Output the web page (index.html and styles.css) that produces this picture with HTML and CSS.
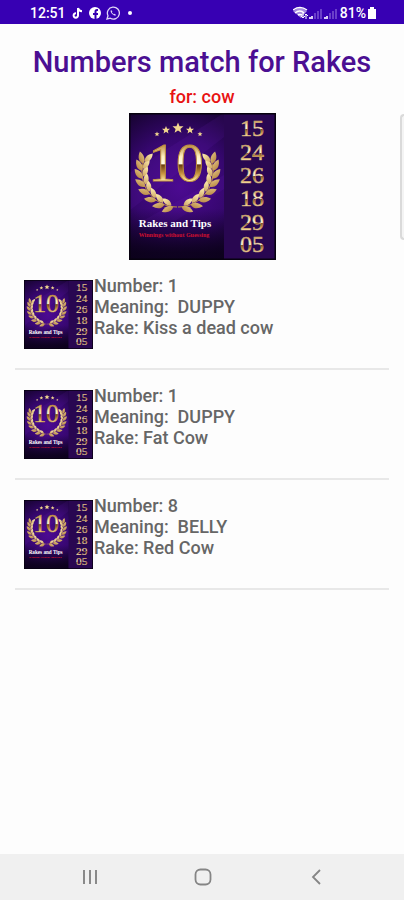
FILE: index.html
```html
<!DOCTYPE html>
<html lang="en">
<head>
    <meta charset="UTF-8">
    <meta name="viewport" content="width=device-width, initial-scale=1.0">
    <title>Rakes and Tips</title>
    <link rel="stylesheet" href="styles.css">
</head>
<body>
<!-- Shared logo -->
<svg class="defs" width="0" height="0" aria-hidden="true">
    <defs>
        <radialGradient id="night" cx="0.35" cy="0.5" r="0.6">
            <stop offset="0" stop-color="#4c0a92"/>
            <stop offset="0.55" stop-color="#36076f"/>
            <stop offset="1" stop-color="#16032f"/>
        </radialGradient>
        <linearGradient id="shade" x1="0" y1="0" x2="0" y2="1">
            <stop offset="0.65" stop-color="#0a0118" stop-opacity="0"/>
            <stop offset="0.95" stop-color="#0a0118" stop-opacity="0.85"/>
        </linearGradient>
        <linearGradient id="gold" x1="0" y1="0" x2="0" y2="1">
            <stop offset="0.2" stop-color="#b8893c"/>
            <stop offset="0.4" stop-color="#fff0c0"/>
            <stop offset="0.52" stop-color="#fffbe8"/>
            <stop offset="0.54" stop-color="#6a3c10"/>
            <stop offset="0.68" stop-color="#c89440"/>
            <stop offset="0.8" stop-color="#ffe9a8"/>
        </linearGradient>
        <linearGradient id="laurel" gradientUnits="userSpaceOnUse" x1="-10" y1="-6" x2="2" y2="6">
            <stop offset="0" stop-color="#f8e2a4"/>
            <stop offset="1" stop-color="#a8712c"/>
        </linearGradient>
        <g id="leaves" fill="url(#laurel)">
            <path d="M0 0C-1 5-5 7-11 6C-9 1-4-2 0 0Z"/>
            <path d="M-2-1C-3-6-7-8-12-7C-10-2-6 0-2-1Z"/>
        </g>
        <g id="branch">
            <path d="M48 93A35 35 0 0 1 15 46" fill="none" stroke="#c1923f"/>
            <use href="#leaves" transform="rotate(6 48 58) translate(48 93)"/>
            <use href="#leaves" transform="rotate(21 48 58) translate(48 93)"/>
            <use href="#leaves" transform="rotate(36 48 58) translate(48 93)"/>
            <use href="#leaves" transform="rotate(51 48 58) translate(48 93)"/>
            <use href="#leaves" transform="rotate(65 48 58) translate(48 93)"/>
            <use href="#leaves" transform="rotate(79 48 58) translate(48 93)"/>
            <use href="#leaves" transform="rotate(92 48 58) translate(48 93)"/>
            <use href="#leaves" transform="rotate(104 48 58) translate(48 93)"/>
        </g>
        <path id="star" d="M0-5L1.4-1.7L5-1.5L2.2 0.8L3.1 4.3L0 2.3L-3.1 4.3L-2.2 0.8L-5-1.5L-1.4-1.7Z" fill="#f3d88e"/>
        <symbol id="logo" viewBox="0 0 147 147">
            <rect width="147" height="147" fill="url(#night)"/>
            <path d="M0 60L95 0V24L0 98ZM10 110L95 62V76L40 112Z" fill="#7424c8" opacity="0.12"/>
            <rect width="95" height="147" fill="url(#shade)"/>
            <rect x="95" width="52" height="147" fill="#290751"/>
            <use href="#star" transform="translate(28 21) scale(0.5)"/>
            <use href="#star" transform="translate(37 17) scale(0.8)"/>
            <use href="#star" transform="translate(49 15) scale(1.1)"/>
            <use href="#star" transform="translate(61 17) scale(0.8)"/>
            <use href="#star" transform="translate(71 21) scale(0.5)"/>
            <g transform="translate(0 1)">
                <use href="#branch"/>
                <use href="#branch" transform="translate(97 0) scale(-1 1)"/>
            </g>
            <text class="logo-ten" x="47" y="68">10</text>
            <text class="logo-name" x="46" y="114">Rakes and Tips</text>
            <text class="logo-tagline" x="45" y="124">Winnings without Guessing</text>
            <g class="logo-draw">
                <text x="123" y="23">15</text>
                <text x="123" y="47">24</text>
                <text x="123" y="70">26</text>
                <text x="123" y="93">18</text>
                <text x="123" y="117">29</text>
                <text x="123" y="139">05</text>
            </g>
            <rect x="0.5" y="0.5" width="146" height="146" fill="none" stroke="#07020f" stroke-width="2"/>
        </symbol>
    </defs>
</svg>

<!-- Status bar -->
<header class="status-bar">
    <div class="status-group">
        <span class="status-time">12:51</span>
        <svg width="12" height="14" viewBox="0 0 12 14" aria-hidden="true">
            <path d="M6 2V9.5A2.2 2.2 0 1 1 4 7.3M6 2C6.5 4.2 8 5.2 10 5.3" fill="none" stroke="#fff" stroke-width="2"/>
        </svg>
        <svg width="12" height="14" viewBox="0 0 12 14" aria-hidden="true">
            <circle cx="6" cy="7" r="6" fill="#fff"/>
            <path d="M9 4H8Q6.500 4 6.500 5.500V13M4 8H9" fill="none" stroke="#3700b3" stroke-width="2"/>
        </svg>
        <svg width="14" height="14" viewBox="0 0 14 14" aria-hidden="true">
            <path d="M1 13L2 9.700A6 6 0 1 1 4.300 12.200Z" fill="none" stroke="#e0d6f6" stroke-width="1.300"/>
            <path d="M5 4C4 5 5 7 6.500 8.300S9.500 10 10 9L8.700 7.800L7.700 8.300L5.900 6.400L6.300 5.300Z" fill="#e0d6f6"/>
        </svg>
        <span class="status-dot"></span>
    </div>
    <div class="status-group status-right">
        <svg width="46" height="14" viewBox="0 0 46 14" aria-hidden="true">
            <path d="M0 5Q7-1 14 5L8 12Z" fill="#a78be0"/>
            <path d="M0 4Q7-1 14 4M2 7Q7 3 11 7M5 9Q7 8 9 9" fill="none" stroke="#fff" stroke-width="1.400"/>
            <path d="M10 7V12M8 10L10 12L12 10M13 13V8M12 9L13 8L15 10" fill="none" stroke="#fff"/>
            <path d="M17 13V11M19 13V10M32 13V11M34 13V10" stroke="#d9cdf4" stroke-width="2"/>
            <path d="M22 13V7M25 13V5M28 13V3M37 13V7M40 13V5M43 13V3" stroke="#6a3fca" stroke-width="2"/>
        </svg>
        <span class="status-battery">81%</span>
        <svg width="10" height="14" viewBox="0 0 10 14" aria-hidden="true">
            <path d="M3 1H7V3H9V13H1V3H3Z" fill="#fff"/>
        </svg>
    </div>
</header>

<main>
    <h1 class="title">Numbers match for Rakes</h1>
    <p class="subtitle">for: cow</p>
    <svg class="logo" role="img" aria-label="Rakes and Tips"><use href="#logo"/></svg>

    <ul class="results">
        <li class="result">
            <svg class="thumb" aria-hidden="true"><use href="#logo"/></svg>
            <div class="result-details">
                <p>Number: 1</p>
                <p>Meaning:&nbsp; DUPPY</p>
                <p>Rake: Kiss a dead cow</p>
            </div>
        </li>
        <li class="result">
            <svg class="thumb" aria-hidden="true"><use href="#logo"/></svg>
            <div class="result-details">
                <p>Number: 1</p>
                <p>Meaning:&nbsp; DUPPY</p>
                <p>Rake: Fat Cow</p>
            </div>
        </li>
        <li class="result">
            <svg class="thumb" aria-hidden="true"><use href="#logo"/></svg>
            <div class="result-details">
                <p>Number: 8</p>
                <p>Meaning:&nbsp; BELLY</p>
                <p>Rake: Red Cow</p>
            </div>
        </li>
    </ul>
</main>

<!-- Edge panel handle, lies over the page -->
<div class="edge-handle"></div>

<!-- System navigation -->
<nav class="nav-bar">
    <button type="button" aria-label="Recent apps">
        <svg width="20" height="20" viewBox="0 0 20 20"><path d="M4 3V17M10 3V17M16 3V17" fill="none" stroke="#8a8a8a" stroke-width="2"/></svg>
    </button>
    <button type="button" aria-label="Home">
        <svg width="20" height="20" viewBox="0 0 20 20"><rect x="2.500" y="2.500" width="15" height="15" rx="5" fill="none" stroke="#858585" stroke-width="1.800"/></svg>
    </button>
    <button type="button" aria-label="Back">
        <svg width="20" height="20" viewBox="0 0 20 20"><path d="M14 3L7 10L14 17" fill="none" stroke="#858585" stroke-width="1.800"/></svg>
    </button>
</nav>
</body>
</html>
```
FILE: styles.css
```css
* {
    box-sizing: border-box;
}

body {
    position: relative;
    display: flex;
    flex-direction: column;
    min-height: 100vh;
    margin: 0;
    font-family: Roboto, sans-serif;
    font-weight: 500;
    background-color: #fdfdfd;
    color: #666;
}

.defs {
    position: absolute;
}

/* Status bar */
.status-bar {
    display: flex;
    justify-content: space-between;
    align-items: center;
    height: 24px;
    padding: 2px 27px 0 30px;
    background-color: #3700b3;
    color: #fff;
    font-size: 14px;
}

.status-group {
    display: flex;
    align-items: center;
    gap: 5px;
}

.status-right {
    gap: 1px;
}

.status-time {
    margin-right: 1px;
}

.status-dot {
    width: 4px;
    height: 4px;
    margin-left: 3px;
    border-radius: 50%;
    background-color: #fff;
}

/* Content */
main {
    flex: 1;
    padding: 0 15px;
}

.title {
    margin: 20px 0 0;
    font-size: 29px;
    font-weight: 500;
    line-height: 36px;
    text-align: center;
    color: #4b0f92;
}

.subtitle {
    margin: 6px 0;
    font-size: 18px;
    line-height: 21px;
    text-align: center;
    color: #e81212;
}

.logo {
    display: block;
    width: 147px;
    height: 147px;
    margin: 0 auto;
}

.logo-ten,
.logo-name,
.logo-tagline,
.logo-draw {
    font-family: "Liberation Serif", serif;
    text-anchor: middle;
}

.logo-ten {
    font-size: 55px;
    font-weight: 400;
    fill: url(#gold);
    stroke: #c1923f;
}

.logo-name {
    font-size: 11px;
    font-weight: 700;
    fill: #fff;
}

.logo-tagline {
    font-size: 6px;
    font-weight: 700;
    fill: #d01030;
}

.logo-draw {
    font-size: 24px;
    font-weight: 400;
    fill: url(#gold);
    stroke: #d0a878;
    stroke-width: 0.5px;
}

.results {
    margin: 0;
    padding: 0;
    list-style: none;
}

.result {
    display: flex;
    align-items: flex-start;
    gap: 1px;
    min-height: 110px;
    padding: 15px 9px;
    border-bottom: 2px solid #e8e8e8;
}

.thumb {
    flex: none;
    width: 69px;
    height: 69px;
    margin-top: 5px;
}

.result-details p {
    margin: 0;
    font-size: 18px;
    line-height: 21px;
}

.edge-handle {
    position: absolute;
    top: 114px;
    right: 0;
    width: 4px;
    height: 126px;
    border: 2px solid #dadada;
    border-right: none;
    border-radius: 4px 0 0 4px;
    background-color: #f4f4f4;
}

/* System navigation */
.nav-bar {
    display: flex;
    justify-content: space-around;
    align-items: center;
    height: 46px;
    padding: 0 31px 0 33px;
    background-color: #f0f0f0;
}

.nav-bar button {
    display: flex;
    padding: 0;
    border: none;
    background: none;
}
```
